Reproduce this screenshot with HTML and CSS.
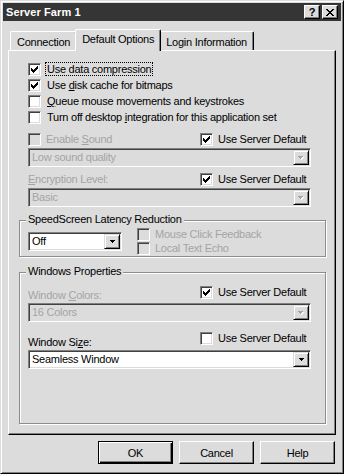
FILE: index.html
```html
<!DOCTYPE html>
<html>
<head>
<meta charset="utf-8">
<title>Server Farm 1</title>
<link rel="stylesheet" href="styles.css">
</head>
<body>
<div class="window">
  <div class="titlebar">
    <span class="title">Server Farm 1</span>
    <div class="tb-buttons">
      <span class="tb-btn help">?</span>
      <span class="tb-btn"><svg class="x-icon" width="8" height="7" viewBox="0 0 8 7"><path d="M0 0h2v1H0zM6 0h2v1H6zM1 1h2v1H1zM5 1h2v1H5zM2 2h4v1H2zM3 3h2v1H3zM2 4h4v1H2zM1 5h2v1H1zM5 5h2v1H5zM0 6h2v1H0zM6 6h2v1H6z" fill="#000"/></svg></span>
    </div>
  </div>
  <div class="body">
    <div class="tabs">
      <div class="tab">Connection</div>
      <div class="tab active">Default Options</div>
      <div class="tab">Login Information</div>
    </div>
    <div class="panel">
      <div class="row"><span class="cb"><svg width="9" height="9" viewBox="0 0 9 9"><path d="M1 3h1v3H1zM2 4h1v3H2zM3 5h1v3H3zM4 4h1v3H4zM5 3h1v3H5zM6 2h1v3H6zM7 1h1v3H7z" fill="#000"/></svg></span><span class="lbl focus">Use data compression</span></div>
      <div class="row"><span class="cb"><svg width="9" height="9" viewBox="0 0 9 9"><path d="M1 3h1v3H1zM2 4h1v3H2zM3 5h1v3H3zM4 4h1v3H4zM5 3h1v3H5zM6 2h1v3H6zM7 1h1v3H7z" fill="#000"/></svg></span><span class="lbl">Use <u>d</u>isk cache for bitmaps</span></div>
      <div class="row"><span class="cb"></span><span class="lbl"><u>Q</u>ueue mouse movements and keystrokes</span></div>
      <div class="row"><span class="cb"></span><span class="lbl">Turn off desktop <u>i</u>ntegration for this application set</span></div>

      <div class="pair gap-sound">
        <div class="item disabled"><span class="cb off"></span><span class="lbl">Enable <u>S</u>ound</span></div>
        <div class="item"><span class="cb"><svg width="9" height="9" viewBox="0 0 9 9"><path d="M1 3h1v3H1zM2 4h1v3H2zM3 5h1v3H3zM4 4h1v3H4zM5 3h1v3H5zM6 2h1v3H6zM7 1h1v3H7z" fill="#000"/></svg></span><span class="lbl">Use Server Default</span></div>
      </div>
      <div class="combo disabled wide">
        <span class="val">Low sound quality</span>
        <span class="drop"><svg width="6" height="4" viewBox="0 0 6 4"><path d="M1 1h5v1H1zM2 2h3v1H2zM3 3h1v1H3z" fill="#fff"/><path d="M0 0h5v1H0zM1 1h3v1H1zM2 2h1v1H2z" fill="#a4a4a4"/></svg></span>
      </div>

      <div class="pair gap-enc">
        <div class="item disabled"><span class="lbl"><u>E</u>ncryption Level:</span></div>
        <div class="item"><span class="cb"><svg width="9" height="9" viewBox="0 0 9 9"><path d="M1 3h1v3H1zM2 4h1v3H2zM3 5h1v3H3zM4 4h1v3H4zM5 3h1v3H5zM6 2h1v3H6zM7 1h1v3H7z" fill="#000"/></svg></span><span class="lbl">Use Server Default</span></div>
      </div>
      <div class="combo disabled wide">
        <span class="val">Basic</span>
        <span class="drop"><svg width="6" height="4" viewBox="0 0 6 4"><path d="M1 1h5v1H1zM2 2h3v1H2zM3 3h1v1H3z" fill="#fff"/><path d="M0 0h5v1H0zM1 1h3v1H1zM2 2h1v1H2z" fill="#a4a4a4"/></svg></span>
      </div>

      <div class="group group-speed">
        <div class="group-title">SpeedScreen Latency Reduction</div>
        <div class="speed-row">
          <div class="combo short">
            <span class="val">Off</span>
            <span class="drop"><svg width="5" height="3" viewBox="0 0 5 3"><path d="M0 0h5v1H0zM1 1h3v1H1zM2 2h1v1H2z" fill="#000"/></svg></span>
          </div>
          <div class="checks">
            <div class="item disabled tight"><span class="cb off"></span><span class="lbl">Mouse Click Feedback</span></div>
            <div class="item disabled tight"><span class="cb off"></span><span class="lbl">Local Text Echo</span></div>
          </div>
        </div>
      </div>

      <div class="group group-win">
        <div class="group-title">Windows Properties</div>
        <div class="pair in-group lift3 gap-colors">
          <div class="item disabled"><span class="lbl">Window <u>C</u>olors:</span></div>
          <div class="item"><span class="cb"><svg width="9" height="9" viewBox="0 0 9 9"><path d="M1 3h1v3H1zM2 4h1v3H2zM3 5h1v3H3zM4 4h1v3H4zM5 3h1v3H5zM6 2h1v3H6zM7 1h1v3H7z" fill="#000"/></svg></span><span class="lbl">Use Server Default</span></div>
        </div>
        <div class="combo disabled grp">
          <span class="val">16 Colors</span>
          <span class="drop"><svg width="6" height="4" viewBox="0 0 6 4"><path d="M1 1h5v1H1zM2 2h3v1H2zM3 3h1v1H3z" fill="#fff"/><path d="M0 0h5v1H0zM1 1h3v1H1zM2 2h1v1H2z" fill="#a4a4a4"/></svg></span>
        </div>
        <div class="pair in-group lift4 gap-size">
          <div class="item"><span class="lbl">Window Si<u>z</u>e:</span></div>
          <div class="item"><span class="cb"></span><span class="lbl">Use Server Default</span></div>
        </div>
        <div class="combo grp">
          <span class="val">Seamless Window</span>
          <span class="drop"><svg width="5" height="3" viewBox="0 0 5 3"><path d="M0 0h5v1H0zM1 1h3v1H1zM2 2h1v1H2z" fill="#000"/></svg></span>
        </div>
      </div>
    </div>
    <div class="buttons">
      <div class="btn default">OK</div>
      <div class="btn">Cancel</div>
      <div class="btn">Help</div>
    </div>
  </div>
</div>
</body>
</html>
```
FILE: styles.css
```css
html, body {
  margin: 0;
  padding: 0;
  background: #dcdcdc;
}

body {
  font-family: "Liberation Sans", Arial, sans-serif;
  font-size: 11px;
  letter-spacing: -0.25px;
  color: #000;
}

.window {
  width: 344px;
  height: 474px;
  box-sizing: border-box;
  border: 1px solid;
  border-color: #dcdcdc #000 #000 #dcdcdc;
  box-shadow: inset 1px 1px 0 #fff, inset -1px -1px 0 #808080;
  padding: 2px;
  background: #dcdcdc;
  display: flex;
  flex-direction: column;
}

/* Title bar */
.titlebar {
  height: 18px;
  background: #353535;
  display: flex;
  align-items: center;
  justify-content: space-between;
  padding: 0 3px 0 3px;
  flex-shrink: 0;
}

.title {
  color: #fff;
  font-weight: bold;
  font-size: 11px;
  line-height: 14px;
  letter-spacing: 0.1px;
}

.tb-buttons {
  display: flex;
  gap: 2px;
}

.tb-btn {
  width: 16px;
  height: 14px;
  box-sizing: border-box;
  border: 1px solid;
  border-color: #fff #000 #000 #fff;
  box-shadow: inset -1px -1px 0 #808080;
  background: #dcdcdc;
  display: flex;
  align-items: center;
  justify-content: center;
}

.tb-btn.help {
  font-weight: bold;
  font-size: 11px;
  line-height: 12px;
  letter-spacing: 0;
}

.x-icon {
  display: block;
}

/* Body */
.body {
  padding: 8px 5px 0 5px;
  display: flex;
  flex-direction: column;
}

.tabs {
  display: flex;
  align-items: flex-end;
  padding-left: 2px;
  height: 22px;
  margin-bottom: -1px;
}

.tab {
  border-top: 1px solid #fff;
  border-left: 1px solid #fff;
  border-right: 1px solid #000;
  border-radius: 2px 2px 0 0;
  box-shadow: inset -1px 0 0 #808080;
  padding: 3px 6px 1px 6px;
  line-height: 14px;
  margin-bottom: 1px;
  background: #dcdcdc;
  white-space: nowrap;
}

.tab.active {
  position: relative;
  z-index: 1;
  margin: 0 -2px 0 -2px;
  padding: 2px 6px 5px 6px;
}

.panel {
  border: 1px solid;
  border-color: #fff #000 #000 #fff;
  box-shadow: inset -1px -1px 0 #808080;
  padding: 10px 9px 10px 10px;
  background: #dcdcdc;
}

/* rows */
.row {
  display: flex;
  align-items: center;
  height: 16px;
  padding-left: 9px;
}

.lbl {
  line-height: 16px;
  white-space: nowrap;
}

.row .lbl {
  margin-left: 6px;
}

.lbl.focus {
  line-height: 12px;
  outline: 1px dotted #000;
  outline-offset: 0;
  padding: 0 1px;
  margin-left: 5px;
}

.cb {
  width: 13px;
  height: 13px;
  box-sizing: border-box;
  border: 1px solid;
  border-color: #808080 #fff #fff #808080;
  box-shadow: inset 1px 1px 0 #404040, inset -1px -1px 0 #dcdcdc;
  background: #fff;
  flex-shrink: 0;
}

.cb svg {
  display: block;
  margin: 1px;
}

.cb.off {
  background: #dcdcdc;
}

.pair {
  display: grid;
  grid-template-columns: 172px auto;
  padding-left: 9px;
}

.pair.in-group {
  padding-left: 0;
  align-items: end;
}

.item {
  display: flex;
  align-items: center;
  height: 16px;
}

.item .cb + .lbl {
  margin-left: 5px;
}

.disabled .lbl,
.disabled .val {
  color: #a4a4a4;
}

.gap-sound { margin-top: 6px; }
.gap-enc { margin-top: 4px; }
.gap-colors { margin-top: 6px; }
.gap-size { margin-top: 8px; }

.lift3 .item + .item { margin-bottom: 3px; }
.lift4 .item + .item { margin-bottom: 4px; }

/* combo boxes */
.combo {
  display: flex;
  height: 19px;
  box-sizing: border-box;
  border: 1px solid;
  border-color: #808080 #fff #fff #808080;
  box-shadow: inset 1px 1px 0 #404040, inset -1px -1px 0 #dcdcdc;
  padding: 1px;
  background: #fff;
}

.combo.disabled {
  background: #dcdcdc;
}

.combo.wide {
  margin: 1px 0 0 9px;
  width: 283px;
}

.combo.grp {
  width: 283px;
}

.combo.short {
  width: 94px;
}

.val {
  flex: 1;
  padding-left: 2px;
  line-height: 15px;
  white-space: nowrap;
  overflow: hidden;
}

.drop {
  width: 16px;
  height: 15px;
  box-sizing: border-box;
  border: 1px solid;
  border-color: #dcdcdc #000 #000 #dcdcdc;
  box-shadow: inset 1px 1px 0 #fff, inset -1px -1px 0 #808080;
  background: #dcdcdc;
  display: flex;
  align-items: center;
  justify-content: center;
}

.drop svg {
  display: block;
}

/* group boxes */
.group {
  border: 1px solid #8c8c8c;
  box-shadow: inset 1px 1px 0 #fff, 1px 1px 0 #fff;
  padding: 0 13px 0 8px;
}

.group-title {
  display: table;
  margin: -9px 0 0 -2px;
  padding: 0 2px;
  line-height: 14px;
  background: #dcdcdc;
}

.group-speed {
  margin-top: 13px;
  padding-bottom: 1px;
}

.group-win {
  margin-top: 15px;
  padding-bottom: 54px;
}

.speed-row {
  display: flex;
  align-items: center;
  margin-top: 1px;
}

.checks {
  margin-left: 15px;
  display: flex;
  flex-direction: column;
}

.item.tight {
  height: 14px;
}

.item.tight .lbl {
  line-height: 14px;
}

/* buttons */
.buttons {
  display: flex;
  justify-content: flex-end;
  gap: 6px;
  margin-top: 6px;
  padding-right: 1px;
}

.btn {
  width: 75px;
  height: 23px;
  box-sizing: border-box;
  border: 1px solid;
  border-color: #fff #000 #000 #fff;
  box-shadow: inset -1px -1px 0 #808080;
  display: flex;
  align-items: center;
  justify-content: center;
  background: #dcdcdc;
}

.btn.default {
  border-color: #000;
  box-shadow: inset 1px 1px 0 #fff, inset -1px -1px 0 #000, inset -2px -2px 0 #808080;
}
```
